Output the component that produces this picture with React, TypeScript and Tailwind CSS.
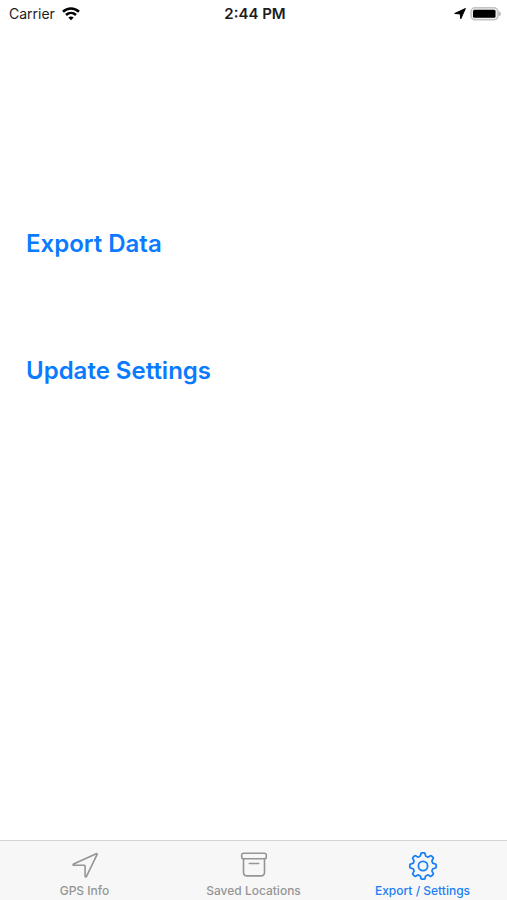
import React from 'react'

const StatusBar = () => {
  return (
    <header className="grid h-7 grid-cols-3 items-center pr-1.5 pl-[9px] text-sm text-[#1c1c1c]">
      <div className="flex items-center gap-[7px]">
        <span>Carrier</span>
        <svg className="h-3.5 w-[18px]" viewBox="0 0 18 14" fill="none" stroke="#000" strokeWidth="2.6" aria-label="Wi-Fi">
          <path d="M1 4.700C5.600.400 12.400.400 17 4.700" />
          <path d="M4 8c2.900-2.700 7.100-2.700 10 0" />
          <path d="M6.300 10.600c1.600-1.500 3.800-1.500 5.400 0L9 13.200z" fill="#000" stroke="none" />
        </svg>
      </div>
      <time className="text-center text-[15px] font-semibold whitespace-nowrap">2:44 PM</time>
      <div className="flex items-center justify-end gap-1">
        <svg className="h-3 w-3" viewBox="0 0 12 12" aria-label="Location in use">
          <path d="M11.400.500 6.800 10.800 6.200 5.900.700 5.500z" fill="#000" stroke="#000" strokeWidth="1" strokeLinejoin="round" />
        </svg>
        <svg className="h-3.5 w-[31px]" viewBox="0 0 31 14" aria-label="Battery full">
          <rect x="1" y=".8" width="27" height="12" rx="4" fill="#eee" stroke="#c4c4c4" strokeWidth="1.500" />
          <rect x="3" y="2.800" width="22.500" height="8" rx="1.500" fill="#000" />
          <path d="M29.300 4.600c1.600.8 1.600 3.600 0 4.400z" fill="#aaa" stroke="#aaa" strokeWidth=".5" />
        </svg>
      </div>
    </header>
  )
}

const ArrowIcon = () => (
  <svg className="h-7 w-7" viewBox="0 0 28 28" fill="none" stroke="currentColor" strokeWidth="1.6" strokeLinejoin="round" aria-hidden="true">
    <path d="M25.2 1.700c.7-.3 1.100.2.8.9L15.500 24.400c-.4.8-1.400.6-1.400-.3V14.200c0-.6-.3-.9-.9-.9H2.900c-.9 0-1.100-1-.3-1.400z" />
  </svg>
)

const ArchiveIcon = () => (
  <svg className="h-7 w-7" viewBox="0 0 28 28" fill="none" stroke="currentColor" strokeWidth="1.6" strokeLinejoin="round" strokeLinecap="round" aria-hidden="true">
    <rect x="1.700" y="1.300" width="24.600" height="5.400" rx="1.800" />
    <path d="M3.500 6.700v13.600c0 2.300 1.200 3.600 3.600 3.600h13.800c2.400 0 3.600-1.300 3.600-3.600V6.700" />
    <path d="M9.300 11.500h9.400" />
  </svg>
)

// eight rounded teeth, one every 45 degrees
const gearPath = () => {
  const at = (r: number, deg: number) => {
    const a = (deg * Math.PI) / 180
    return `${(14 + r * Math.sin(a)).toFixed(2)} ${(14 - r * Math.cos(a)).toFixed(2)}`
  }
  let d = `M${at(13.2, -5)}`
  for (let t = 0; t < 360; t += 45) {
    d += `L${at(13.2, t + 5)}Q${at(13.2, t + 9)} ${at(12.2, t + 10)}`
    d += `L${at(11.3, t + 12)}Q${at(9.7, t + 15)} ${at(10.1, t + 22.5)}`
    d += `Q${at(9.7, t + 30)} ${at(11.3, t + 33)}L${at(12.2, t + 35)}`
    d += `Q${at(13.2, t + 36)} ${at(13.2, t + 40)}`
  }
  return d + 'Z'
}

const GearIcon = () => (
  <svg className="h-7 w-7 overflow-visible" viewBox="0 0 28 28" fill="none" stroke="currentColor" strokeWidth="1.8" strokeLinejoin="round" aria-hidden="true">
    <path d={gearPath()} />
    <circle cx="14" cy="14" r="4.600" />
  </svg>
)

const tabs = [
  { label: 'GPS Info', Icon: ArrowIcon, active: false },
  { label: 'Saved Locations', Icon: ArchiveIcon, active: false },
  { label: 'Export / Settings', Icon: GearIcon, active: true },
]

const App = () => {
  return (
    <div className="flex min-h-screen flex-col bg-white font-['Inter',sans-serif]">
      <StatusBar />

      <main className="flex flex-1 flex-col items-start gap-[95px] px-[26px] pt-[200px] pb-8">
        <button className="text-2xl font-semibold text-[#0a7aff]">Export Data</button>
        <button className="text-2xl font-semibold text-[#0a7aff]">Update Settings</button>
      </main>

      <nav className="grid grid-cols-3 border-t border-[#d4d4d4] bg-[#f7f7f7] pt-[11px] pb-px">
        {tabs.map(({ label, Icon, active }) => (
          <a
            key={label}
            href="#"
            aria-current={active ? 'page' : undefined}
            className={`flex flex-col items-center gap-[3px] text-xs font-medium whitespace-nowrap ${active ? 'text-[#1a80f5]' : 'text-[#959595]'}`}
          >
            <Icon />
            <span>{label}</span>
          </a>
        ))}
      </nav>
    </div>
  )
}

export default App
